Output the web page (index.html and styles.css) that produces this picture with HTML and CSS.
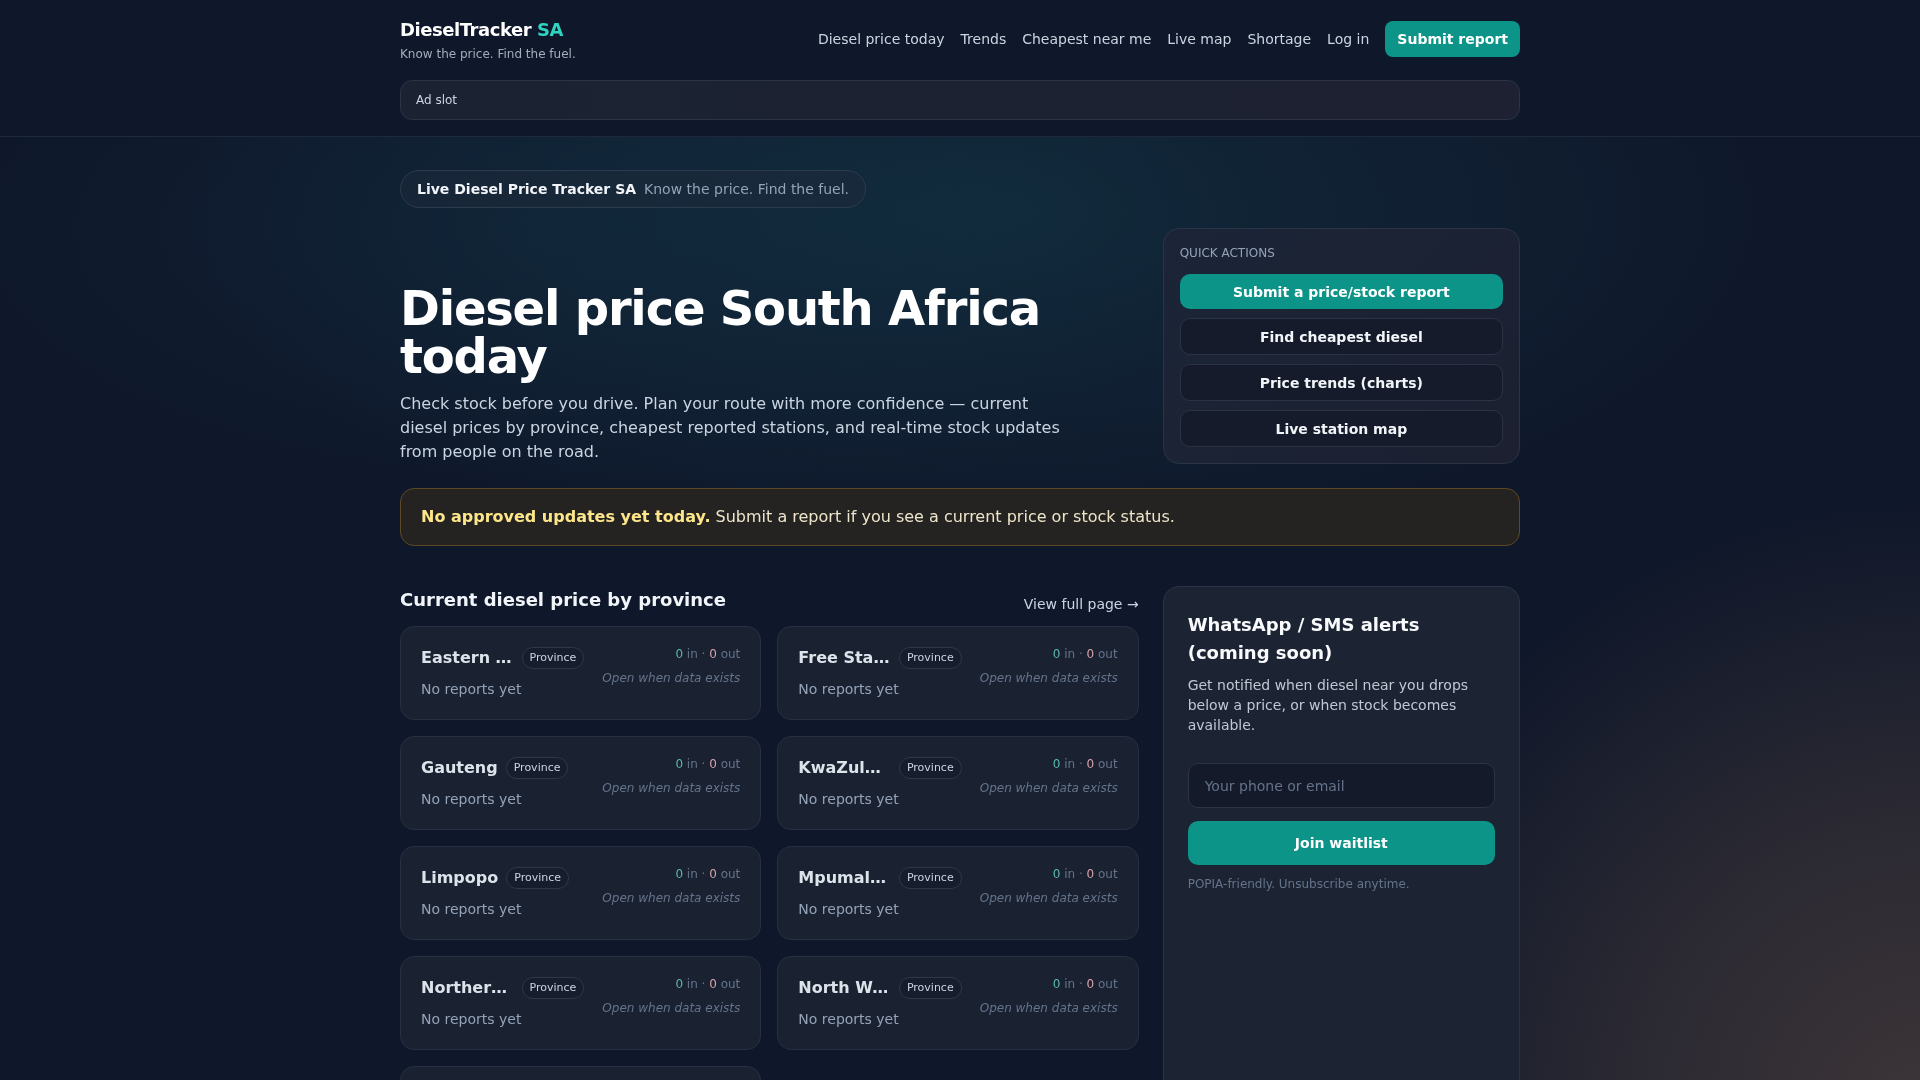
FILE: index.html
```html
<!DOCTYPE html>
<html lang="en">
<head>
<meta charset="utf-8">
<title>DieselTracker SA</title>
<link rel="stylesheet" href="styles.css">
</head>
<body>
<div class="bg-glow"></div>
<header class="site-header">
  <div class="container">
    <div class="header-row">
      <div class="brand">
        <div class="brand-name">DieselTracker <span class="accent">SA</span></div>
        <div class="brand-tag">Know the price. Find the fuel.</div>
      </div>
      <nav class="nav">
        <a href="#">Diesel price today</a>
        <a href="#">Trends</a>
        <a href="#">Cheapest near me</a>
        <a href="#">Live map</a>
        <a href="#">Shortage</a>
        <a href="#">Log in</a>
        <a href="#" class="btn-submit">Submit report</a>
      </nav>
    </div>
    <div class="ad-slot">Ad slot</div>
  </div>
</header>

<main class="container">
  <section class="hero">
    <div class="pill"><strong>Live Diesel Price Tracker SA</strong><span>Know the price. Find the fuel.</span></div>
    <div class="grid hero-grid">
      <div class="hero-copy span-2">
        <h1>Diesel price South Africa today</h1>
        <p>Check stock before you drive. Plan your route with more confidence — current diesel prices by province, cheapest reported stations, and real-time stock updates from people on the road.</p>
      </div>
      <aside class="quick">
        <div class="quick-label">Quick actions</div>
        <div class="quick-actions">
          <a href="#" class="qa-btn primary">Submit a price/stock report</a>
          <a href="#" class="qa-btn ghost">Find cheapest diesel</a>
          <a href="#" class="qa-btn ghost">Price trends (charts)</a>
          <a href="#" class="qa-btn ghost">Live station map</a>
        </div>
      </aside>
    </div>
  </section>

  <div class="alert"><strong>No approved updates yet today.</strong> Submit a report if you see a current price or stock status.</div>

  <section class="grid prov-section">
    <div class="span-2">
      <div class="section-head">
        <h2>Current diesel price by province</h2>
        <a href="#" class="view-link">View full page →</a>
      </div>
      <div class="cards">
        <div class="card"><div class="card-left"><div class="name-row"><span class="name">Eastern Cape</span><span class="badge">Province</span></div><div class="status">No reports yet</div></div><div class="card-right"><div class="counts"><span class="in">0</span> in · <span class="out">0</span> out</div><div class="hint">Open when data exists</div></div></div>
        <div class="card"><div class="card-left"><div class="name-row"><span class="name">Free State</span><span class="badge">Province</span></div><div class="status">No reports yet</div></div><div class="card-right"><div class="counts"><span class="in">0</span> in · <span class="out">0</span> out</div><div class="hint">Open when data exists</div></div></div>
        <div class="card"><div class="card-left"><div class="name-row"><span class="name">Gauteng</span><span class="badge">Province</span></div><div class="status">No reports yet</div></div><div class="card-right"><div class="counts"><span class="in">0</span> in · <span class="out">0</span> out</div><div class="hint">Open when data exists</div></div></div>
        <div class="card"><div class="card-left"><div class="name-row"><span class="name">KwaZulu-Natal</span><span class="badge">Province</span></div><div class="status">No reports yet</div></div><div class="card-right"><div class="counts"><span class="in">0</span> in · <span class="out">0</span> out</div><div class="hint">Open when data exists</div></div></div>
        <div class="card"><div class="card-left"><div class="name-row"><span class="name">Limpopo</span><span class="badge">Province</span></div><div class="status">No reports yet</div></div><div class="card-right"><div class="counts"><span class="in">0</span> in · <span class="out">0</span> out</div><div class="hint">Open when data exists</div></div></div>
        <div class="card"><div class="card-left"><div class="name-row"><span class="name">Mpumalanga</span><span class="badge">Province</span></div><div class="status">No reports yet</div></div><div class="card-right"><div class="counts"><span class="in">0</span> in · <span class="out">0</span> out</div><div class="hint">Open when data exists</div></div></div>
        <div class="card"><div class="card-left"><div class="name-row"><span class="name">Northern Cape</span><span class="badge">Province</span></div><div class="status">No reports yet</div></div><div class="card-right"><div class="counts"><span class="in">0</span> in · <span class="out">0</span> out</div><div class="hint">Open when data exists</div></div></div>
        <div class="card"><div class="card-left"><div class="name-row"><span class="name">North West</span><span class="badge">Province</span></div><div class="status">No reports yet</div></div><div class="card-right"><div class="counts"><span class="in">0</span> in · <span class="out">0</span> out</div><div class="hint">Open when data exists</div></div></div>
        <div class="card"><div class="card-left"><div class="name-row"><span class="name">Western Cape</span><span class="badge">Province</span></div><div class="status">No reports yet</div></div><div class="card-right"><div class="counts"><span class="in">0</span> in · <span class="out">0</span> out</div><div class="hint">Open when data exists</div></div></div>
      </div>
    </div>
    <aside class="wa-card">
      <h3>WhatsApp / SMS alerts (coming soon)</h3>
      <p class="wa-desc">Get notified when diesel near you drops below a price, or when stock becomes available.</p>
      <input class="wa-input" type="text" placeholder="Your phone or email">
      <button class="wa-btn" type="button">Join waitlist</button>
      <p class="wa-note">POPIA-friendly. Unsubscribe anytime.</p>
    </aside>
  </section>
</main>
</body>
</html>
```

FILE: styles.css
```css
html, body {
  margin: 0;
  padding: 0;
}

body {
  background: #0f172a;
  color: #e2e8f0;
  font-family: "DejaVu Sans", "Noto Sans", sans-serif;
  padding-bottom: 40px;
}

.bg-glow {
  position: fixed;
  inset: 0;
  z-index: -1;
  pointer-events: none;
  background:
    radial-gradient(ellipse 820px 360px at 1000px 210px, rgba(24, 112, 122, 0.20), rgba(24, 112, 122, 0) 100%),
    radial-gradient(ellipse 700px 300px at 560px 230px, rgba(24, 90, 110, 0.12), rgba(24, 90, 110, 0) 100%),
    radial-gradient(circle 620px at 1930px 1120px, rgba(120, 92, 74, 0.44) 0%, rgba(120, 92, 74, 0.26) 50%, rgba(120, 92, 74, 0) 100%),
    #0f172a;
}

a {
  text-decoration: none;
  color: inherit;
}

.container {
  max-width: 1120px;
  margin: 0 auto;
}

/* Header */
.site-header {
  background: #0f172a;
  border-bottom: 1px solid #1e293b;
}

.header-row {
  display: flex;
  justify-content: space-between;
  align-items: center;
  padding-top: 16px;
}

.brand-name {
  font-size: 18px;
  line-height: 28px;
  font-weight: 700;
  letter-spacing: -0.025em;
  color: #ffffff;
}

.accent {
  color: #2dd4bf;
}

.brand-tag {
  margin-top: 2px;
  font-size: 12px;
  line-height: 16px;
  color: #a3adbb;
}

.nav {
  display: flex;
  align-items: center;
  gap: 16px;
  font-size: 14px;
  line-height: 20px;
}

.nav a {
  color: #cbd5e1;
}

.nav .btn-submit {
  background: #0d9488;
  color: #ffffff;
  font-weight: 700;
  padding: 8px 12px;
  border-radius: 8px;
}

.ad-slot {
  margin: 18px 0 16px;
  padding: 11px 15px;
  border: 1px solid #2a3445;
  border-radius: 12px;
  background: linear-gradient(90deg, #1b2333, #1e2131);
  font-size: 12px;
  line-height: 16px;
  color: #cbd5e1;
}

/* Hero */
.hero {
  padding-top: 33px;
}

.pill {
  display: inline-flex;
  align-items: center;
  gap: 8px;
  padding: 8px 16px;
  border: 1px solid #2e3a4d;
  border-radius: 999px;
  background: rgba(30, 41, 59, 0.55);
  font-size: 14px;
  line-height: 20px;
}

.pill strong {
  color: #f1f5f9;
}

.pill span {
  color: #94a3b8;
}

.grid {
  display: grid;
  grid-template-columns: repeat(3, minmax(0, 1fr));
  gap: 24px;
}

.span-2 {
  grid-column: span 2;
}

.hero-grid {
  margin-top: 20px;
  align-items: end;
}

.hero-copy h1 {
  margin: 0;
  font-size: 48px;
  line-height: 48px;
  font-weight: 700;
  letter-spacing: -0.025em;
  color: #ffffff;
}

.hero-copy p {
  margin: 12px 0 0;
  max-width: 672px;
  font-size: 16px;
  line-height: 24px;
  color: #cbd5e1;
}

.quick {
  padding: 16px;
  border: 1px solid #2a3446;
  border-radius: 16px;
  background: linear-gradient(135deg, #1b2537, #1c2031);
}

.quick-label {
  font-size: 12px;
  line-height: 16px;
  color: #94a3b8;
  text-transform: uppercase;
}

.quick-actions {
  display: flex;
  flex-direction: column;
  gap: 9px;
  margin-top: 13px;
}

.qa-btn {
  display: block;
  border-radius: 10px;
  text-align: center;
  font-size: 14px;
  line-height: 20px;
  font-weight: 700;
  color: #ffffff;
}

.qa-btn.primary {
  padding: 7.5px 0;
  background: #0d9488;
}

.qa-btn.ghost {
  padding: 7.5px 0;
  border: 1px solid #2a3344;
  background: #161b2b;
  color: #f1f5f9;
}

/* Alert */
.alert {
  margin-top: 24px;
  padding: 16px 20px;
  border: 1px solid #5e4a22;
  border-radius: 14px;
  background: #242321;
  font-size: 16px;
  line-height: 24px;
  color: #ede4ca;
}

.alert strong {
  color: #fde68a;
}

/* Provinces */
.prov-section {
  margin-top: 40px;
  align-items: stretch;
}

.section-head {
  display: flex;
  justify-content: space-between;
  align-items: flex-end;
  margin-bottom: 12px;
}

.section-head h2 {
  margin: 0;
  font-size: 18px;
  line-height: 28px;
  font-weight: 700;
  color: #f1f5f9;
}

.view-link {
  font-size: 14px;
  line-height: 20px;
  color: #cbd5e1;
}

.cards {
  display: grid;
  grid-template-columns: repeat(2, minmax(0, 1fr));
  gap: 16px;
}

.card {
  display: flex;
  justify-content: space-between;
  gap: 18px;
  padding: 20px;
  border: 1px solid #273042;
  border-radius: 14px;
  background: #1a2131;
}

.card-left {
  flex: 1 1 auto;
  min-width: 0;
}

.name-row {
  display: flex;
  align-items: center;
  gap: 8px;
}

.name {
  min-width: 0;
  overflow: hidden;
  white-space: nowrap;
  text-overflow: ellipsis;
  font-size: 16px;
  line-height: 22px;
  font-weight: 700;
  color: #dde3ea;
}

.badge {
  flex-shrink: 0;
  padding: 2px 7px;
  border: 1px solid #2e3849;
  border-radius: 999px;
  background: #161d2c;
  font-size: 11px;
  line-height: 16px;
  color: #cbd5e1;
}

.status {
  margin-top: 10px;
  font-size: 14px;
  line-height: 20px;
  color: #94a3b8;
}

.card-right {
  flex-shrink: 0;
  text-align: right;
  font-size: 12px;
}

.counts {
  line-height: 15px;
  color: #64748b;
}

.counts .in {
  color: #5ab8ae;
}

.counts .out {
  color: #d9a3ab;
}

.hint {
  margin-top: 8px;
  line-height: 16px;
  font-style: italic;
  color: #64748b;
}

/* WhatsApp card */
.wa-card {
  padding: 24px;
  border: 1px solid #2a3344;
  border-radius: 16px;
  background: #1c2333;
}

.wa-card h3 {
  margin: 0;
  font-size: 18px;
  line-height: 28px;
  font-weight: 700;
  color: #f8fafc;
}

.wa-desc {
  margin: 8px 0 0;
  font-size: 14px;
  line-height: 20px;
  color: #c0c8d4;
}

.wa-input {
  display: block;
  box-sizing: border-box;
  width: 100%;
  height: 45px;
  margin-top: 28px;
  padding: 0 16px;
  border: 1px solid #2b3446;
  border-radius: 10px;
  background: #141a2a;
  color: #e2e8f0;
  font-family: "DejaVu Sans", sans-serif;
  font-size: 14px;
  outline: none;
}

.wa-input::placeholder {
  color: #64748b;
}

.wa-btn {
  display: block;
  width: 100%;
  height: 44px;
  margin-top: 13px;
  border: 0;
  border-radius: 10px;
  background: #0d9488;
  color: #ffffff;
  font-family: "DejaVu Sans", sans-serif;
  font-size: 14px;
  font-weight: 700;
}

.wa-note {
  margin: 11px 0 0;
  font-size: 12px;
  line-height: 16px;
  color: #64748b;
}
```
